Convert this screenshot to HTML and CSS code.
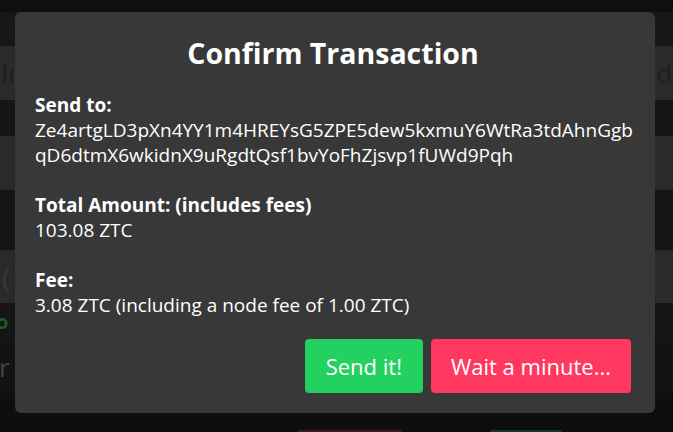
FILE: index.html
```html
<!DOCTYPE html>
<html>
<head>
<meta charset="utf-8">
<link rel="stylesheet" href="styles.css">
</head>
<body>
<div class="page">
  <div class="band top"></div>
  <div class="band nav"></div>
  <div class="band field"><span class="ghost left-in">In</span><span class="ghost right-dr">dress</span></div>
  <div class="band gap1"></div>
  <div class="band field"></div>
  <div class="band gap2"></div>
  <div class="band field f3"><span class="ghost paren">(</span></div>
  <div class="band status"><span class="ok">o</span></div>
  <div class="band row-r"><span class="rtext">r</span></div>
  <div class="band foot">
    <span class="bg-btn red"></span>
    <span class="bg-btn green"></span>
  </div>
</div>

<div class="modal">
  <h1 class="title">Confirm Transaction</h1>
  <div class="block">
    <div class="label">Send to:</div>
    <div class="value addr">Ze4artgLD3pXn4YY1m4HREYsG5ZPE5dew5kxmuY6WtRa3tdAhnGgbqD6dtmX6wkidnX9uRgdtQsf1bvYoFhZjsvp1fUWd9Pqh</div>
  </div>
  <div class="block">
    <div class="label">Total Amount: (includes fees)</div>
    <div class="value">103.08 ZTC</div>
  </div>
  <div class="block">
    <div class="label">Fee:</div>
    <div class="value">3.08 ZTC (including a node fee of 1.00 ZTC)</div>
  </div>
  <div class="actions">
    <button class="btn send">Send it!</button>
    <button class="btn wait">Wait a minute...</button>
  </div>
</div>
</body>
</html>
```

FILE: styles.css
```css
* { box-sizing: border-box; }
html, body { margin: 0; padding: 0; }
body {
  background: #0e0e0e;
  font-family: "Open Sans", "Noto Sans", sans-serif;
  width: 673px;
  height: 432px;
  overflow: hidden;
}
.page {
  display: flex;
  flex-direction: column;
  width: 673px;
  height: 432px;
}
.band { width: 100%; flex: none; }
.top { height: 12px; background: #0f0f0f; }
.nav { height: 34px; background: #171717; }
.field {
  height: 54px;
  background: #2a2a2a;
  display: grid;
  grid-template-columns: 656px 1fr;
  align-items: center;
  overflow: hidden;
}
.f3 { height: 53px; }
.gap1 { height: 36px; background: #151515; }
.gap2 { height: 60px; background: #141414; }
.ghost {
  font-size: 26px;
  color: #1f1f1f;
  white-space: nowrap;
  overflow: hidden;
}
.left-in { padding-left: 1px; }
.paren { padding-left: 2px; color: #3a3a3a; }
.status {
  height: 37px;
  background: #151515;
  display: flex;
  align-items: center;
}
.ok { color: #1b5a2c; font-size: 20px; font-weight: 700; margin-left: -4px; }
.row-r {
  height: 53px;
  background: #131313;
  display: flex;
  align-items: center;
}
.rtext { color: #444; font-size: 26px; margin-left: -1px; }
.foot {
  flex: 1;
  background: #0e0e0e;
  display: flex;
  align-items: flex-end;
  padding-left: 298px;
}
.bg-btn { height: 2px; display: block; border-radius: 3px 3px 0 0; }
.bg-btn.red { width: 104px; background: #3d1821; }
.bg-btn.green { width: 72px; background: #153a22; margin-left: 88px; }

.modal {
  position: absolute;
  top: 12px;
  left: 15px;
  width: 640px;
  background: #383838;
  border-radius: 6px;
  padding: 23px 24px 20px 20px;
  color: #fff;
}
.title {
  margin: 0 0 22px;
  text-align: center;
  font-size: 28.5px;
  line-height: 36px;
  font-weight: 700;
  color: #fff;
}
.block { font-size: 19px; line-height: 25px; }
.block + .block { margin-top: 25px; }
.label { font-weight: 700; }
.addr { word-break: break-all; width: 605px; }
.actions {
  display: flex;
  justify-content: flex-end;
  gap: 8px;
  margin-top: 21px;
}
.btn {
  font-family: "Open Sans", "Noto Sans", sans-serif;
  font-size: 22px;
  height: 54px;
  border: none;
  border-radius: 4px;
  color: #fff;
  padding: 0 20px;
  cursor: pointer;
}
.send { background: #23d160; padding: 0 21px; }
.wait { background: #ff3860; padding: 0 20px; }
```
